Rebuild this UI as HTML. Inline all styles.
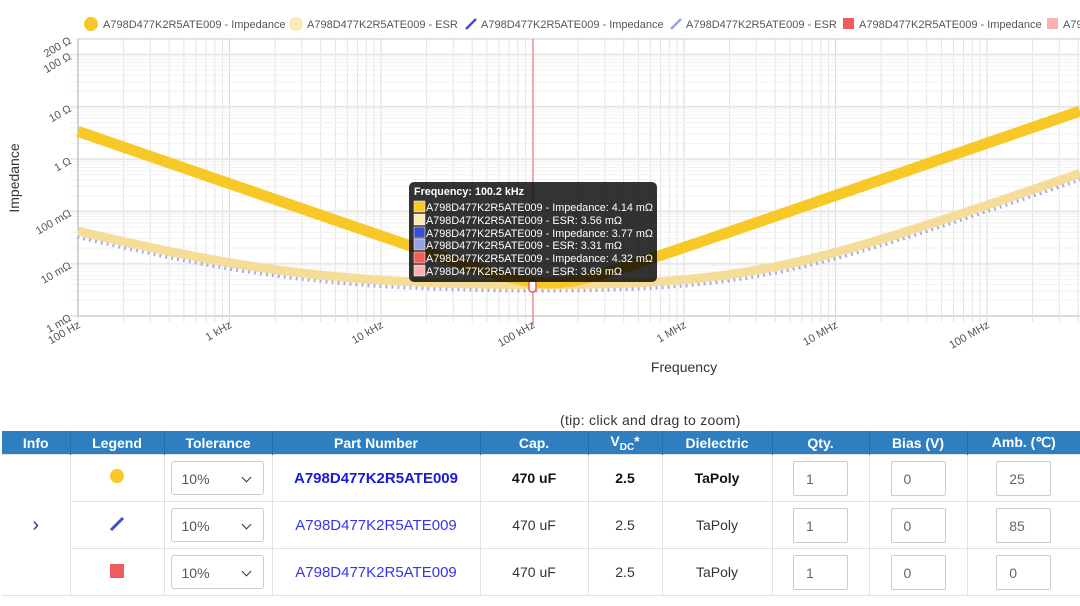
<!DOCTYPE html>
<html><head><meta charset="utf-8"><style>
body{margin:0;width:1080px;height:606px;overflow:hidden;background:#fff;font-family:"Liberation Sans",sans-serif;position:relative}
.abs{position:absolute}
table{position:absolute;left:2px;top:431px;border-collapse:collapse;table-layout:fixed;width:1078px;font-size:14px}
th{background:#2f7fc0;color:#fff;height:23px;font-weight:bold;font-size:14px;border-right:1px solid #286fa8;padding:0}
td{border:1px solid #e2e2e2;height:46px;text-align:center;padding:0;color:#333}
.sel{width:93px;height:34px;border:1px solid #ccc;border-radius:3px;margin:0 auto 0 6px;position:relative;box-sizing:border-box;text-align:left;line-height:34px;padding-left:10px;color:#555}
.sel:after{content:"";position:absolute;right:13px;top:12px;width:6px;height:6px;border-right:1.5px solid #333;border-bottom:1.5px solid #333;transform:rotate(45deg)}
.inp{width:55px;height:35px;border:1px solid #ccc;border-radius:2px;margin:0 auto;box-sizing:border-box;text-align:left;line-height:35px;padding-left:12px;color:#666}
.b td.t{font-weight:bold;color:#111}
a{color:#3636e8;text-decoration:none}
</style></head><body>
<svg class="abs" style="left:0;top:0" width="1080" height="400" id="s">
<g id="grid"></g>
<g font-size="11" fill="#555">
<circle cx="91" cy="24" r="7" fill="#f8c926"/><text x="103" y="28">A798D477K2R5ATE009 - Impedance</text>
<circle cx="296" cy="24" r="7" fill="#f8ebb5"/><text x="307" y="28">A798D477K2R5ATE009 - ESR</text>
<line x1="466" y1="29" x2="476" y2="19" stroke="#3c4fd0" stroke-width="2.5"/><text x="481" y="28">A798D477K2R5ATE009 - Impedance</text>
<line x1="671" y1="29" x2="681" y2="19" stroke="#9aa2e6" stroke-width="2.5"/><text x="686" y="28">A798D477K2R5ATE009 - ESR</text>
<rect x="843" y="18" width="11" height="11" fill="#ef5d5d"/><text x="859" y="28">A798D477K2R5ATE009 - Impedance</text>
<rect x="1047" y="18" width="11" height="11" fill="#fbb1b1"/><text x="1063" y="28">A79</text>
</g>
<g id="curves"></g>
<line x1="533" y1="39" x2="533" y2="326" stroke="#f08080" stroke-width="1.2"/>
<rect x="529" y="280" width="7" height="12" rx="3" fill="#fff" stroke="#e55" stroke-width="1.5"/>
<g font-size="11" fill="#555" id="labels"></g>
<text x="19" y="178" font-size="14" fill="#333" transform="rotate(-90 19 178)" text-anchor="middle">Impedance</text>
<text x="684" y="372" font-size="14" fill="#333" text-anchor="middle">Frequency</text>
<g>
<rect x="409" y="182" width="248" height="100" rx="5" fill="rgba(0,0,0,0.8)"/>
<g font-size="11" fill="#fff">
<text x="414" y="195" font-weight="bold" textLength="110" lengthAdjust="spacingAndGlyphs">Frequency: 100.2 kHz</text>
<rect x="414" y="201" width="11" height="11" fill="#f8c926" stroke="#fff" stroke-width="0.5"/><text x="426" y="211" textLength="227" lengthAdjust="spacingAndGlyphs">A798D477K2R5ATE009 - Impedance: 4.14 mΩ</text>
<rect x="414" y="214" width="11" height="11" fill="#f8ebb5" stroke="#fff" stroke-width="0.5"/><text x="426" y="224" textLength="196" lengthAdjust="spacingAndGlyphs">A798D477K2R5ATE009 - ESR: 3.56 mΩ</text>
<rect x="414" y="227" width="11" height="11" fill="#3c4fd0" stroke="#fff" stroke-width="0.5"/><text x="426" y="237" textLength="227" lengthAdjust="spacingAndGlyphs">A798D477K2R5ATE009 - Impedance: 3.77 mΩ</text>
<rect x="414" y="239" width="11" height="11" fill="#9aa2e6" stroke="#fff" stroke-width="0.5"/><text x="426" y="249" textLength="196" lengthAdjust="spacingAndGlyphs">A798D477K2R5ATE009 - ESR: 3.31 mΩ</text>
<rect x="414" y="252" width="11" height="11" fill="#ef5d5d" stroke="#fff" stroke-width="0.5"/><text x="426" y="262" textLength="227" lengthAdjust="spacingAndGlyphs">A798D477K2R5ATE009 - Impedance: 4.32 mΩ</text>
<rect x="414" y="265" width="11" height="11" fill="#fbb1b1" stroke="#fff" stroke-width="0.5"/><text x="426" y="275" textLength="196" lengthAdjust="spacingAndGlyphs">A798D477K2R5ATE009 - ESR: 3.69 mΩ</text>
</g></g>
</svg>
<div class="abs" style="left:560px;top:412px;font-size:14px;color:#333;letter-spacing:0.3px">(tip: click and drag to zoom)</div>
<table>
<colgroup><col style="width:68px"><col style="width:94px"><col style="width:108px"><col style="width:208px"><col style="width:108px"><col style="width:74px"><col style="width:110px"><col style="width:97px"><col style="width:98px"><col style="width:113px"></colgroup>
<tr><th>Info</th><th>Legend</th><th>Tolerance</th><th>Part Number</th><th>Cap.</th><th>V<sub style="font-size:10px">DC</sub>*</th><th>Dielectric</th><th>Qty.</th><th>Bias (V)</th><th style="border-right:0">Amb. (℃)</th></tr>
<tr class="b"><td rowspan="3" style="border-left:0;color:#1f3c88;font-size:20px">›</td><td><span style="display:inline-block;width:14px;height:14px;border-radius:50%;background:#f8c926;position:relative;top:-1px"></span></td><td><div class="sel">10%</div></td><td class="t"><a style="font-weight:bold;color:#1a1ad8;font-size:15px">A798D477K2R5ATE009</a></td><td class="t">470 uF</td><td class="t">2.5</td><td class="t">TaPoly</td><td><div class="inp">1</div></td><td><div class="inp">0</div></td><td style="border-right:0"><div class="inp">25</div></td></tr>
<tr><td><svg width="16" height="16"><line x1="2" y1="14" x2="14" y2="2" stroke="#3c4fd0" stroke-width="3"/></svg></td><td><div class="sel">10%</div></td><td><a style="font-size:15px">A798D477K2R5ATE009</a></td><td>470 uF</td><td>2.5</td><td>TaPoly</td><td><div class="inp">1</div></td><td><div class="inp">0</div></td><td style="border-right:0"><div class="inp">85</div></td></tr>
<tr><td><span style="display:inline-block;width:14px;height:14px;background:#ef5d5d"></span></td><td><div class="sel">10%</div></td><td><a style="font-size:15px">A798D477K2R5ATE009</a></td><td>470 uF</td><td>2.5</td><td>TaPoly</td><td><div class="inp">1</div></td><td><div class="inp">0</div></td><td style="border-right:0"><div class="inp">0</div></td></tr>
</table>
<script>
var X0=78,DX=151.5,Y0=316,DY=52.3,NS="http://www.w3.org/2000/svg";
function fx(f){return X0+Math.log10(f/100)*DX}
function fy(z){return Y0-Math.log10(z/0.001)*DY}
function el(p,t,a){var e=document.createElementNS(NS,t);for(var k in a)e.setAttribute(k,a[k]);p.appendChild(e);return e}
var g=document.getElementById('grid'),lb=document.getElementById('labels');
for(var d=0;d<7;d++)for(var m=1;m<10;m++){var x=fx(100*Math.pow(10,d)*m);if(x>1080)break;el(g,'line',{x1:x,y1:39,x2:x,y2:m==1?326:322,stroke:m==1?'#d8d8d8':'#e4e4e4','stroke-width':1});}
for(var d=0;d<6;d++)for(var m=1;m<10;m++){var z=0.001*Math.pow(10,d)*m;if(z>200)break;var y=fy(z);el(g,'line',{x1:70,y1:y,x2:1080,y2:y,stroke:m==1?'#e8e8e8':'#f2f2f2','stroke-width':m==1?2:1});}
el(g,'line',{x1:78,y1:39,x2:1080,y2:39,stroke:'#ccc'});el(g,'line',{x1:78,y1:39,x2:78,y2:316,stroke:'#aaa'});el(g,'line',{x1:78,y1:316,x2:1080,y2:316,stroke:'#ccc'});
var yl=[[0.001,'1 mΩ'],[0.01,'10 mΩ'],[0.1,'100 mΩ'],[1,'1 Ω'],[10,'10 Ω'],[100,'100 Ω'],[200,'200 Ω']];
yl.forEach(function(a){var y=fy(a[0])+4;var t=el(lb,'text',{x:72,y:y,'text-anchor':'end',transform:'rotate(-30 72 '+y+')'});t.textContent=a[1];});
var xl=['100 Hz','1 kHz','10 kHz','100 kHz','1 MHz','10 MHz','100 MHz'];
xl.forEach(function(s,i){var x=fx(100*Math.pow(10,i))+3,y=327;var t=el(lb,'text',{x:x,y:y,'text-anchor':'end',transform:'rotate(-30 '+x+' '+y+')'});t.textContent=s;});
function esr(f,k){return k*(0.0034+0.036*Math.pow(100/f,0.75)+1.2e-9*f)}
function imp(f,k){var C=470e-6*k,L=3.2e-9,w=2*Math.PI*f;var X=w*L-1/(w*C);return Math.sqrt(Math.pow(esr(f,1)*1.15,2)+X*X)}
function path(fn,dy){var s='';for(var x=78;x<=1082;x+=3){var f=100*Math.pow(10,(x-X0)/DX);s+=(s?'L':'M')+x+','+(fy(fn(f))+dy).toFixed(1);}return s}
var c=document.getElementById('curves');
el(c,'path',{d:path(function(f){return esr(f,0.92)},0),fill:'none',stroke:'#a7aee8','stroke-width':9,'stroke-dasharray':'2 4'});
el(c,'path',{d:path(function(f){return esr(f,1)},-1.5),fill:'none',stroke:'#f5dc98','stroke-width':9});
el(c,'path',{d:path(function(f){return imp(f,1)},0),fill:'none',stroke:'#f8c926','stroke-width':11});
</script>
</body></html>
